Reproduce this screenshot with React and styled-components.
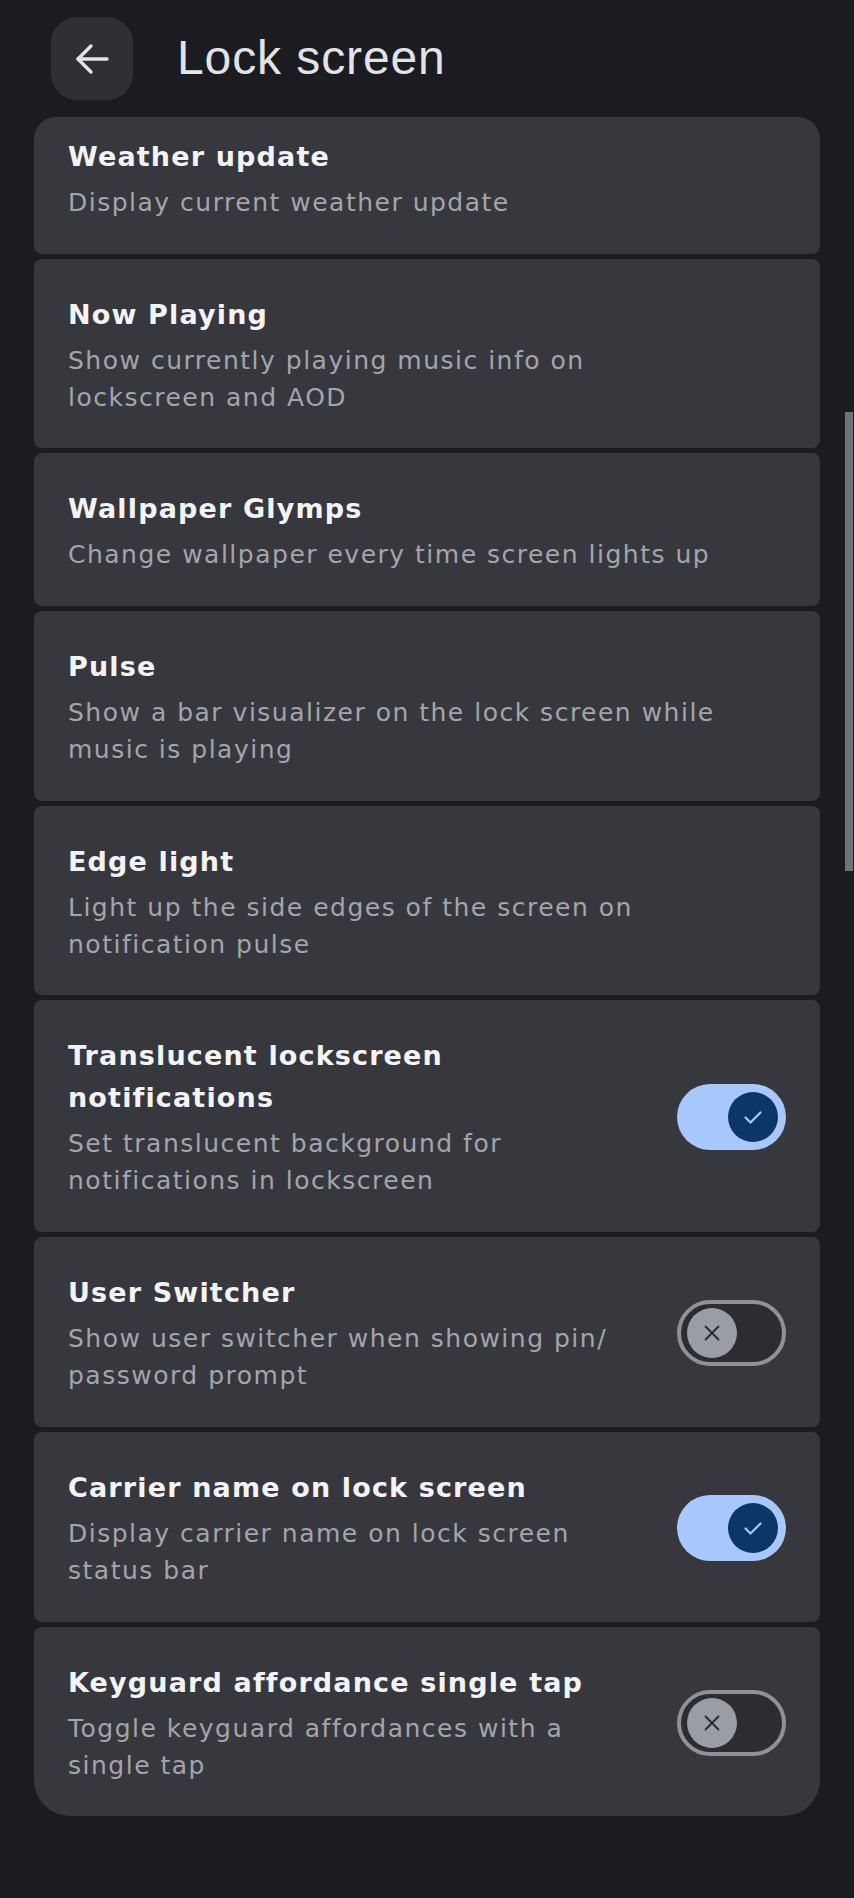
import styled, { createGlobalStyle } from "styled-components";

const items = [
  { title: "Weather update", desc: ["Display current weather update"], first: true },
  { title: "Now Playing", desc: ["Show currently playing music info on", "lockscreen and AOD"] },
  { title: "Wallpaper Glymps", desc: ["Change wallpaper every time screen lights up"] },
  { title: "Pulse", desc: ["Show a bar visualizer on the lock screen while", "music is playing"] },
  { title: "Edge light", desc: ["Light up the side edges of the screen on", "notification pulse"] },
  {
    title: ["Translucent lockscreen", "notifications"],
    desc: ["Set translucent background for", "notifications in lockscreen"],
    toggle: true,
    on: true,
  },
  { title: "User Switcher", desc: ["Show user switcher when showing pin/", "password prompt"], toggle: true, on: false },
  {
    title: "Carrier name on lock screen",
    desc: ["Display carrier name on lock screen", "status bar"],
    toggle: true,
    on: true,
  },
  {
    title: "Keyguard affordance single tap",
    desc: ["Toggle keyguard affordances with a", "single tap"],
    toggle: true,
    on: false,
    last: true,
  },
];

function Lines({ lines }) {
  const arr = Array.isArray(lines) ? lines : [lines];
  return arr.map((l, i) => (
    <span key={i}>
      {l}
      {i < arr.length - 1 && <br />}
    </span>
  ));
}

function Switch({ on }) {
  return (
    <Track $on={on}>
      <Thumb $on={on}>
        {on ? (
          <svg width="24" height="24" viewBox="0 0 24 24" fill="none" stroke="#a8c8fb" strokeWidth="2.2" strokeLinecap="round" strokeLinejoin="round">
            <path d="M4.5 12.5l5 5 10-10" />
          </svg>
        ) : (
          <svg width="22" height="22" viewBox="0 0 24 24" fill="none" stroke="#2d2f34" strokeWidth="2.2" strokeLinecap="round">
            <path d="M5 5l14 14M19 5L5 19" />
          </svg>
        )}
      </Thumb>
    </Track>
  );
}

function App() {
  return (
    <>
      <Global />
      <Page>
        <Header>
          <BackButton>
            <svg width="36" height="32" viewBox="0 0 36 32" fill="none" stroke="#e2e3e8" strokeWidth="3.4" strokeLinecap="round" strokeLinejoin="round">
              <path d="M33 16H4" />
              <path d="M17 3L4 16l13 13" />
            </svg>
          </BackButton>
          <Title>Lock screen</Title>
        </Header>

        <List>
          {items.map((it, i) => (
            <Card key={i} $first={it.first} $last={it.last}>
              <TextCol>
                <ItemTitle>
                  <Lines lines={it.title} />
                </ItemTitle>
                <ItemDesc>
                  <Lines lines={it.desc} />
                </ItemDesc>
              </TextCol>
              {it.toggle && <Switch on={it.on} />}
            </Card>
          ))}
        </List>
        <ScrollThumb />
      </Page>
    </>
  );
}

const Global = createGlobalStyle`
  html, body {
    margin: 0;
    padding: 0;
    background: #1a1c1f;
  }
  body {
    font-family: "DejaVu Sans", Inter, sans-serif;
  }
`;

const Page = styled.div`
  position: relative;
  width: 854px;
  min-height: 1898px;
  background: #1a1c1f;
  overflow: hidden;
`;

const Header = styled.div`
  display: flex;
  align-items: center;
  gap: 44px;
  padding: 17px 0 0 51px;
  height: 83px;
`;

const BackButton = styled.div`
  width: 82px;
  height: 83px;
  border-radius: 26px;
  background: #2e3035;
  display: flex;
  align-items: center;
  justify-content: center;
`;

const Title = styled.h1`
  margin: 0;
  font-family: "Liberation Sans", Arial, sans-serif;
  font-size: 48px;
  font-weight: 400;
  color: #e2e3e8;
  letter-spacing: 0.9px;
  padding-bottom: 2px;
`;

const List = styled.div`
  display: flex;
  flex-direction: column;
  gap: 5px;
  margin: 17px 34px 0;
  overflow: hidden;
  border-radius: 22px 22px 0 0;
`;

const Card = styled.div`
  display: flex;
  align-items: center;
  gap: 24px;
  background: #37383d;
  padding: 35px 34px 32.7px;
  border-radius: ${(p) => (p.$last ? "8px 8px 36px 36px" : "8px")};
  margin-top: ${(p) => (p.$first ? "-16px" : "0")};
`;

const TextCol = styled.div`
  flex: 1;
  min-width: 0;
  display: flex;
  flex-direction: column;
  gap: 6px;
`;

const ItemTitle = styled.div`
  font-size: 27px;
  line-height: 42px;
  font-weight: 700;
  color: #f3f3f5;
  letter-spacing: 1.15px;
`;

const ItemDesc = styled.div`
  font-size: 25px;
  line-height: 37px;
  font-weight: 400;
  color: #a4a5aa;
  letter-spacing: 1.5px;
`;

const Track = styled.div`
  flex: none;
  box-sizing: border-box;
  width: 109px;
  height: 66px;
  border-radius: 33px;
  display: flex;
  align-items: center;
  justify-content: ${(p) => (p.$on ? "flex-end" : "flex-start")};
  padding: 0 ${(p) => (p.$on ? "8px" : "6px")};
  background: ${(p) => (p.$on ? "#a8c8fb" : "#2c2d32")};
  border: ${(p) => (p.$on ? "none" : "4px solid #8e9198")};
`;

const Thumb = styled.div`
  width: 50px;
  height: 50px;
  border-radius: 50%;
  display: flex;
  align-items: center;
  justify-content: center;
  background: ${(p) => (p.$on ? "#0b3666" : "#9b9da4")};
`;

const ScrollThumb = styled.div`
  position: absolute;
  right: 1px;
  top: 412px;
  width: 8px;
  height: 459px;
  background: #6f7278;
`;

export default App;
